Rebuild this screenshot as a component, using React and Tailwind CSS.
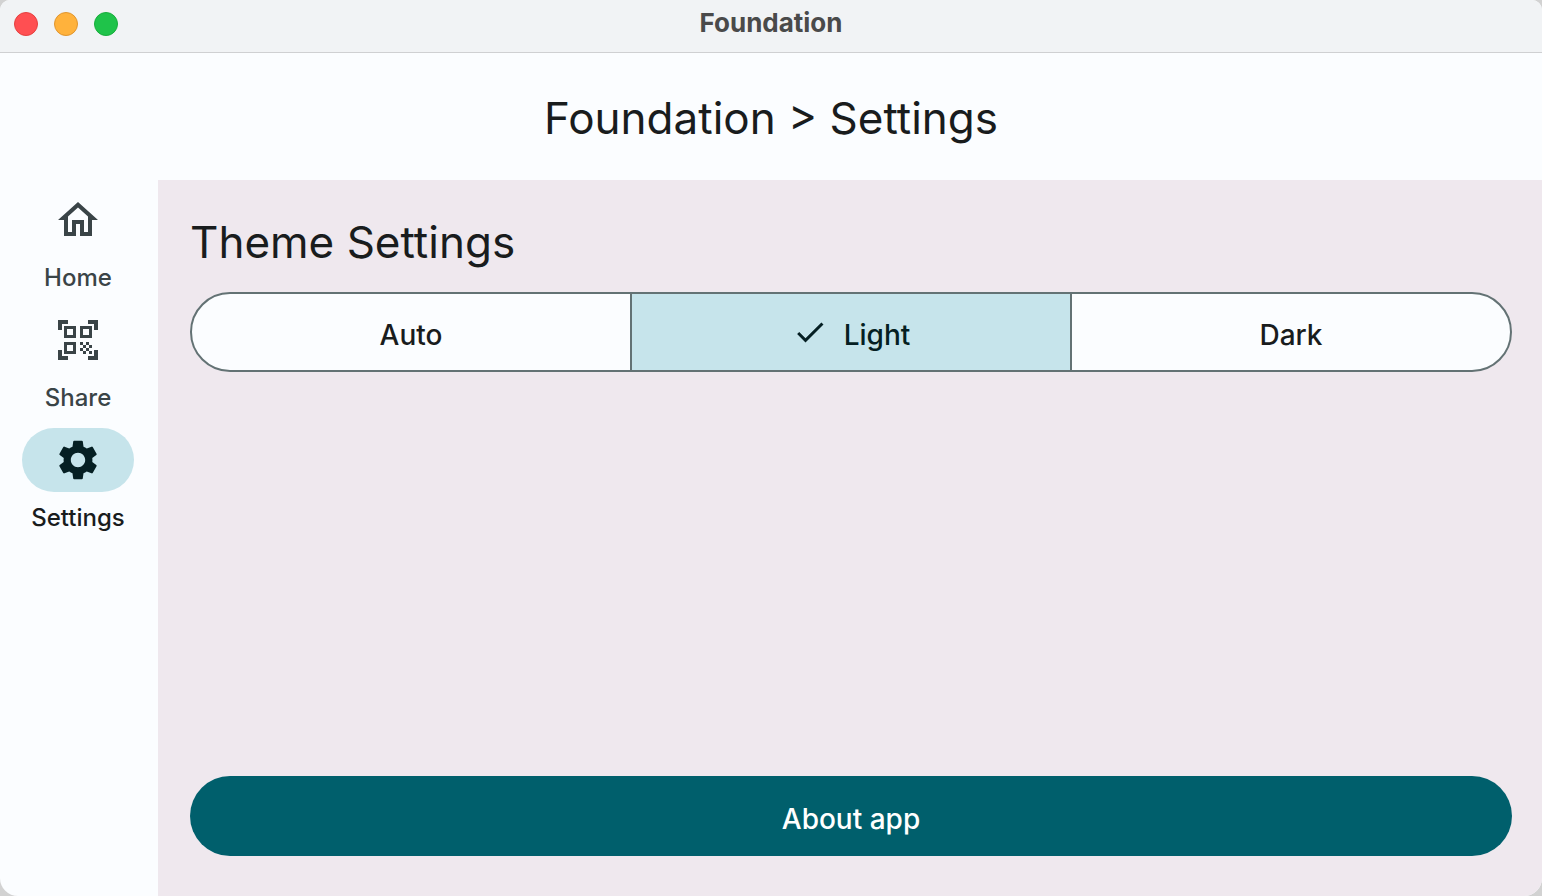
import { useState } from "react";
import { MdOutlineHome, MdQrCodeScanner, MdSettings, MdCheck } from "react-icons/md";

const navItems = [
  { label: "Home", icon: MdOutlineHome },
  { label: "Share", icon: MdQrCodeScanner },
  { label: "Settings", icon: MdSettings },
];

const themes = ["Auto", "Light", "Dark"];

function TitleBar() {
  return (
    <div className="grid h-[53px] shrink-0 grid-cols-[1fr_auto_1fr] items-center border-b border-[#cfd0d2] bg-[#f1f3f5] px-3.5 pb-1">
      <div className="flex gap-4">
        <button type="button" aria-label="Close" className="size-6 rounded-full border border-[#e5403f] bg-[#ff4f52]" />
        <button type="button" aria-label="Minimize" className="size-6 rounded-full border border-[#e0952f] bg-[#ffb23c]" />
        <button type="button" aria-label="Zoom" className="size-6 rounded-full border border-[#18ad3c] bg-[#1fc34a]" />
      </div>
      <div className="pb-0.5 text-[26px] leading-8 font-bold text-[#4a4a4a]">Foundation</div>
    </div>
  );
}

function NavItem({ label, icon: Icon, active, onSelect }) {
  return (
    <button
      type="button"
      onClick={onSelect}
      aria-current={active ? "page" : undefined}
      className={
        "flex w-28 flex-col items-center gap-2.5 " + (active ? "text-[#191c1d]" : "text-[#3a4447]")
      }
    >
      <span
        className={
          "flex h-16 w-28 items-center justify-center rounded-full " +
          (active ? "bg-[#c6e4eb] text-[#051f23]" : "")
        }
      >
        <Icon className="size-12" />
      </span>
      <span className="text-2xl leading-8 font-medium">{label}</span>
    </button>
  );
}

function ThemePicker() {
  const [theme, setTheme] = useState("Light");
  return (
    <div
      role="radiogroup"
      aria-labelledby="theme-heading"
      className="flex h-20 divide-x-2 divide-[#637274] overflow-hidden rounded-full border-2 border-[#637274] bg-[#fbfdff]"
    >
      {themes.map((name) => (
        <label
          key={name}
          className={
            "relative flex flex-1 cursor-pointer items-center justify-center gap-4 " +
            (theme === name ? "bg-[#c6e4eb] text-[#051f23]" : "text-[#191c1d]")
          }
        >
          <input
            type="radio"
            name="theme"
            value={name}
            checked={theme === name}
            onChange={() => setTheme(name)}
            className="sr-only"
          />
          {theme === name && <MdCheck className="size-9" />}
          <span className="pt-1.5 text-[28px] leading-10 font-medium">{name}</span>
        </label>
      ))}
    </div>
  );
}

export default function App() {
  const [page, setPage] = useState("Settings");
  return (
    <div className="min-h-screen bg-[#d2d2d2] font-['Inter',sans-serif] text-[#191c1d]">
      <div className="flex min-h-screen flex-col overflow-hidden rounded-t-[10px] rounded-b-[18px] bg-[#fbfdff]">
        <TitleBar />
        <header className="flex h-[127px] shrink-0 items-center justify-center pt-0.5">
          <h1 className="text-[44px] leading-[60px]">Foundation &gt; Settings</h1>
        </header>
        <div className="flex flex-1">
          <nav className="flex w-[158px] shrink-0 flex-col gap-3.5 pt-2 pl-[22px]">
            {navItems.map((item) => (
              <NavItem
                key={item.label}
                {...item}
                active={page === item.label}
                onSelect={() => setPage(item.label)}
              />
            ))}
          </nav>
          <main className="flex flex-1 flex-col bg-[#efe8ee] pt-8 pr-[30px] pb-10 pl-8">
            <h2 id="theme-heading" className="mb-5 text-[44px] leading-[60px]">
              Theme Settings
            </h2>
            <ThemePicker />
            <button
              type="button"
              className="mt-auto h-20 rounded-full bg-[#005f6c] pt-1.5 text-[28px] leading-10 font-medium text-white"
            >
              About app
            </button>
          </main>
        </div>
      </div>
    </div>
  );
}
